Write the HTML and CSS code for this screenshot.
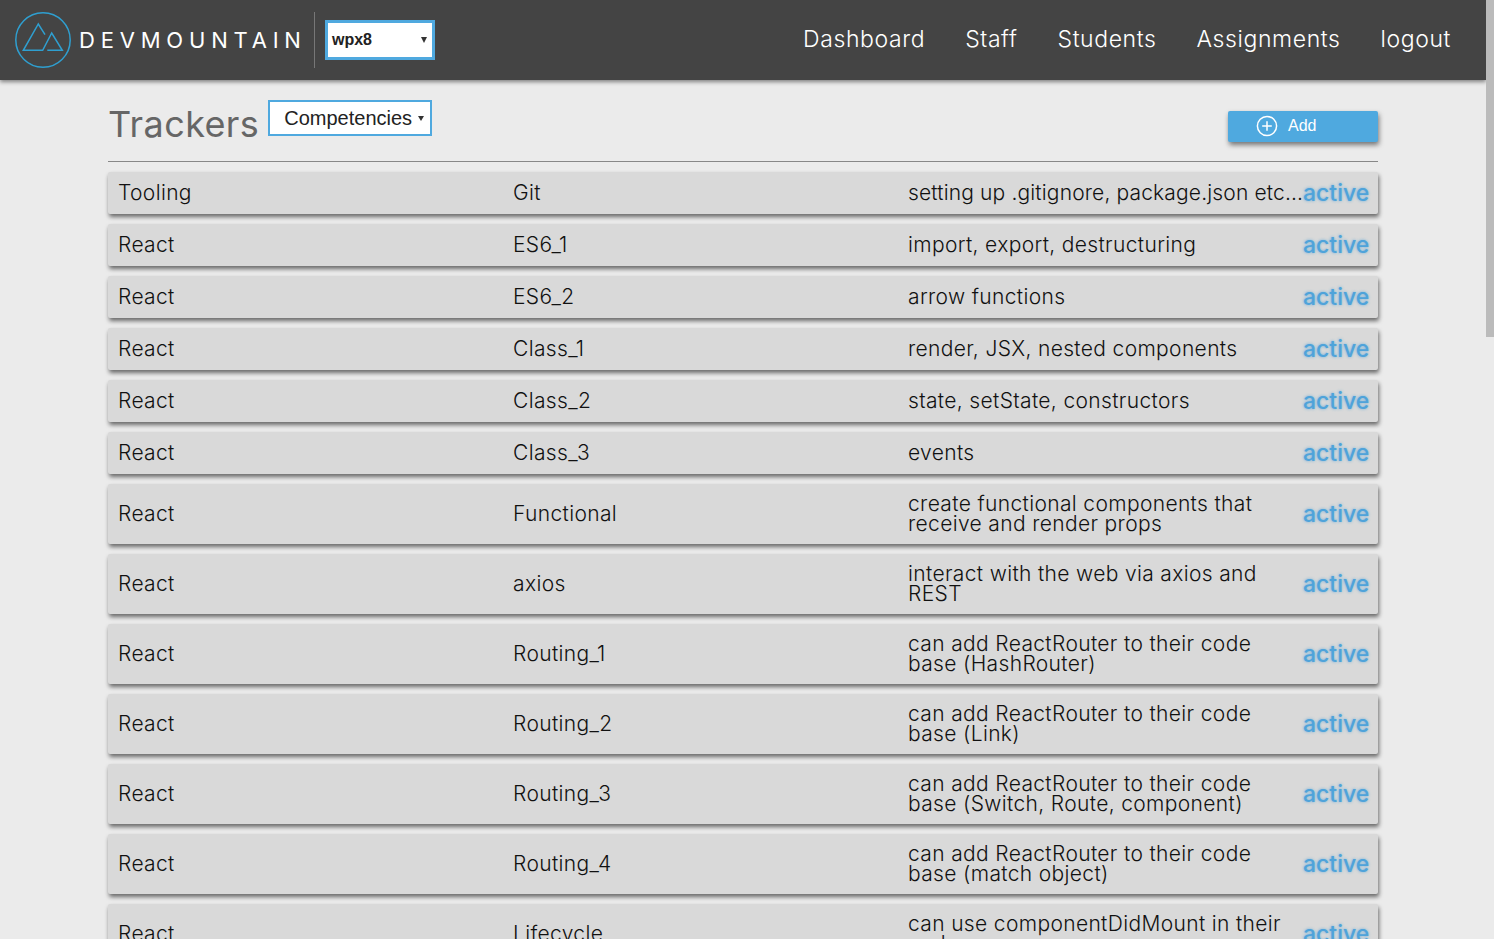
FILE: index.html
```html
<!DOCTYPE html>
<html lang="en">
<head>
<meta charset="utf-8">
<title>Trackers</title>
<link rel="stylesheet" href="styles.css">
</head>
<body>
<div class="shell">
  <div class="page">
    <header class="topbar">
      <div class="brand">
        <svg class="logo" viewBox="0 0 56 56" width="56" height="56" fill="none" stroke="#2f9fd0" stroke-width="1.5">
          <circle cx="28" cy="28" r="27.2"/>
          <path d="M30 22.7 23.3 12 8.3 38.3H27.7L36.7 21 47.3 38.3H32.3"/>
        </svg>
        <span class="wordmark">DEVMOUNTAIN</span>
      </div>
      <div class="cohort"><span>wpx8</span><i class="caret"></i></div>
      <nav class="nav">
        <a>Dashboard</a><a>Staff</a><a>Students</a><a>Assignments</a><a>logout</a>
      </nav>
    </header>
    <main class="content">
      <div class="title-row">
        <h1>Trackers</h1>
        <div class="type-select"><span>Competencies</span><i class="caret small"></i></div>
        <button class="add">
          <svg viewBox="0 0 22 22" width="22" height="22" fill="none" stroke="#fff" stroke-width="1.5"><circle cx="11" cy="11" r="9.6"/><path d="M11 6.2v9.6M6.2 11h9.6"/></svg>
          <span>Add</span>
        </button>
      </div>
      <div class="rows">
        <div class="row first"><span>Tooling</span><span>Git</span><span class="desc">setting up .gitignore, package.json etc...</span><b>active</b></div>
        <div class="row"><span>React</span><span>ES6_1</span><span class="desc">import, export, destructuring</span><b>active</b></div>
        <div class="row"><span>React</span><span>ES6_2</span><span class="desc">arrow functions</span><b>active</b></div>
        <div class="row"><span>React</span><span>Class_1</span><span class="desc">render, JSX, nested components</span><b>active</b></div>
        <div class="row"><span>React</span><span>Class_2</span><span class="desc">state, setState, constructors</span><b>active</b></div>
        <div class="row"><span>React</span><span>Class_3</span><span class="desc">events</span><b>active</b></div>
        <div class="row tall"><span>React</span><span>Functional</span><span class="desc">create functional components that<br>receive and render props</span><b>active</b></div>
        <div class="row tall"><span>React</span><span>axios</span><span class="desc">interact with the web via axios and<br>REST</span><b>active</b></div>
        <div class="row tall"><span>React</span><span>Routing_1</span><span class="desc">can add ReactRouter to their code<br>base (HashRouter)</span><b>active</b></div>
        <div class="row tall"><span>React</span><span>Routing_2</span><span class="desc">can add ReactRouter to their code<br>base (Link)</span><b>active</b></div>
        <div class="row tall"><span>React</span><span>Routing_3</span><span class="desc">can add ReactRouter to their code<br>base (Switch, Route, component)</span><b>active</b></div>
        <div class="row tall"><span>React</span><span>Routing_4</span><span class="desc">can add ReactRouter to their code<br>base (match object)</span><b>active</b></div>
        <div class="row tall"><span>React</span><span>Lifecycle</span><span class="desc">can use componentDidMount in their<br>code</span><b>active</b></div>
      </div>
    </main>
  </div>
  <aside class="scrollbar"><div class="thumb"></div></aside>
</div>
</body>
</html>
```
FILE: styles.css
```css
* { box-sizing: border-box; }
html, body { margin: 0; height: 100%; overflow: hidden; }
body { font-family: Inter, "Liberation Sans", sans-serif; background: #ebebeb; color: #111; }
.shell { display: flex; height: 939px; }
.page { flex: 1; min-width: 0; overflow: hidden; }
.scrollbar { width: 8px; background: #ebebeb; }
.thumb { height: 337px; background: #bbb; }

.topbar { height: 80px; background: #444; display: flex; align-items: center; padding: 0 35px 0 15px; box-shadow: 0 2px 4px rgba(0,0,0,.45); position: relative; }
.brand { display: flex; align-items: center; height: 56px; border-right: 1px solid #777; }
.logo { display: block; }
.wordmark { margin-left: 8px; width: 235px; font-size: 22px; font-weight: 400; letter-spacing: 5.8px; color: #fff; white-space: nowrap; }
.cohort { margin-left: 10px; width: 110px; height: 40px; background: #fff; border: 3px solid #4fa9df; display: flex; align-items: center; justify-content: space-between; padding: 0 5px 0 4px; font: bold 16px "Liberation Sans", sans-serif; color: #222; }
.caret { width: 0; height: 0; border-left: 3.5px solid transparent; border-right: 3.5px solid transparent; border-top: 6px solid #333; }
.caret.small { border-left-width: 3px; border-right-width: 3px; border-top-width: 5px; }
.nav { margin-left: auto; padding-bottom: 2px; display: flex; gap: 40px; font-size: 23px; font-weight: 300; letter-spacing: .6px; color: #fff; white-space: nowrap; }

.content { width: 1270px; margin: 0 auto; }
.title-row { height: 82px; border-bottom: 1px solid #888; display: flex; align-items: flex-start; position: relative; }
h1 { margin: 21px 0 0; font-size: 36px; font-weight: 400; line-height: 46px; letter-spacing: .4px; color: #666; }
.type-select { margin: 20px 0 0 9px; width: 164px; height: 36px; background: #fff; border: 2px solid #4fa9df; display: flex; align-items: center; justify-content: space-between; padding: 0 6px 0 14px; font: 20px "Liberation Sans", sans-serif; color: #222; }
.add { margin: 31px 0 0 auto; width: 150px; height: 31px; border: 0; border-radius: 2px; background: #4fa9df; box-shadow: 1px 3px 5px rgba(0,0,0,.5); color: #fff; display: flex; align-items: center; gap: 10px; padding: 0 0 2px 28px; font: 16px "Liberation Sans", sans-serif; }

.rows { display: flex; flex-direction: column; gap: 10px; padding-top: 10px; }
.row { flex: none; height: 42px; background: #d9d9d9; border-radius: 2px; box-shadow: 1px 3px 4px rgba(0,0,0,.55); display: grid; grid-template-columns: 395px 395px 395px 1fr; align-items: center; padding: 0 10px; font-size: 21px; font-weight: 300; line-height: 20px; letter-spacing: .35px; white-space: nowrap; }
.row.tall { height: 60px; }
.first .desc { letter-spacing: .15px; }
.row b { font-weight: 500; color: #4fa3da; font-size: 23px; letter-spacing: 0; text-align: right; text-shadow: 0 0 3px rgba(79,163,218,.8); }
```
